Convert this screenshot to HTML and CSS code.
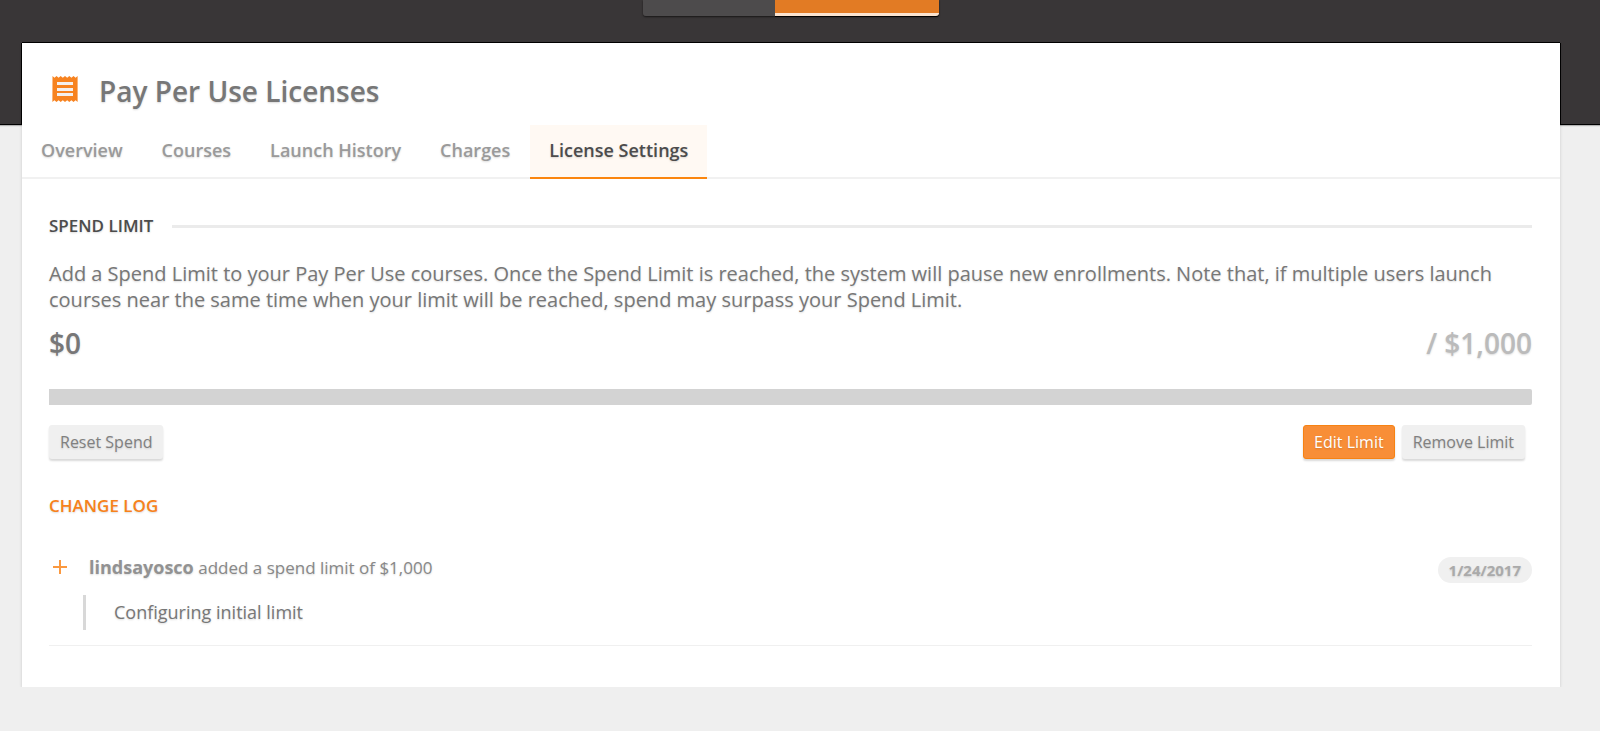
FILE: index.html
```
<!DOCTYPE html>
<html lang="en">
<head>
    <meta charset="UTF-8">
    <meta name="viewport" content="width=device-width, initial-scale=1.0">
    <title>Pay Per Use Licenses</title>
    <link rel="stylesheet" href="styles.css">
</head>
<body>
    <header class="top-bar">
        <div class="switcher">
            <div class="switch-item"></div>
            <div class="switch-item active"></div>
        </div>
    </header>

    <main class="card">
        <div class="card-head">
            <svg class="title-icon" width="26" height="26" viewBox="0 0 26 26" aria-hidden="true">
                <path fill="#f78320" d="M0.500 0l2 1.700 2-1.700 2.100 1.700 2.100-1.700 2.100 1.700 2.200-1.700 2.200 1.700 2.100-1.700 2.100 1.700 2.100-1.700 2.100 1.700 2-1.700v26l-2-1.700-2.100 1.700-2.100-1.700-2.100 1.700-2.100-1.700-2.200 1.700-2.200-1.700-2.100 1.700-2.100-1.700-2.100 1.700-2.100-1.700-2 1.700z"/>
                <path fill="#f4f0ee" d="M5 6h16v3H5zM5 12h16v3H5zM5 17h16v3H5z"/>
            </svg>
            <h1>Pay Per Use Licenses</h1>
        </div>

        <nav class="tabs">
            <a href="#overview">Overview</a>
            <a href="#courses">Courses</a>
            <a href="#history">Launch History</a>
            <a href="#charges">Charges</a>
            <a href="#settings" class="active">License Settings</a>
        </nav>

        <div class="card-body">
            <h2 class="section-title">SPEND LIMIT</h2>
            <p class="intro">Add a Spend Limit to your Pay Per Use courses. Once the Spend Limit is reached, the system will pause new enrollments. Note that, if multiple users launch courses near the same time when your limit will be reached, spend may surpass your Spend Limit.</p>

            <div class="amounts">
                <span class="spent">$0</span>
                <span class="limit">/ $1,000</span>
            </div>
            <div class="progress"></div>

            <div class="actions">
                <button type="button" class="btn">Reset Spend</button>
                <div class="limit-actions">
                    <button type="button" class="btn btn-primary">Edit Limit</button>
                    <button type="button" class="btn">Remove Limit</button>
                </div>
            </div>

            <h2 class="log-title">CHANGE LOG</h2>
            <div class="log-entry">
                <svg class="plus" width="14" height="14" viewBox="0 0 14 14" aria-hidden="true">
                    <path d="M7 0v14M0 7h14" stroke="#fb993f" stroke-width="2"/>
                </svg>
                <div class="log-text">
                    <p class="log-line"><strong>lindsayosco</strong> added a spend limit of $1,000</p>
                    <blockquote>Configuring initial limit</blockquote>
                </div>
                <time class="log-date" datetime="2017-01-24">1/24/2017</time>
            </div>
        </div>
    </main>
</body>
</html>
```
FILE: styles.css
```
* {
    box-sizing: border-box;
}

body {
    margin: 0;
    background-color: #efefef;
    color: #777;
    font-family: "Open Sans", "Noto Sans", sans-serif;
    text-shadow: 0 1px 2px rgba(0, 0, 0, 0.15);
}

h1, h2, p, blockquote {
    margin: 0;
}

.top-bar {
    display: flex;
    justify-content: center;
    align-items: flex-start;
    height: 125px;
    padding-right: 18px;
    background-color: #393637;
    border-bottom: 1px solid #000;
    box-shadow: 0 1px 1px rgba(0, 0, 0, 0.25);
}

.switcher {
    display: flex;
    height: 16px;
    border-radius: 0 0 3px 3px;
    box-shadow: 0 1px 2px rgba(0, 0, 0, 0.6);
}

.switch-item {
    width: 132px;
    background-color: #4d4b4c;
    border-radius: 0 0 0 3px;
}

.switch-item.active {
    width: 164px;
    background-color: #e27b24;
    border-bottom: 3px solid #fbe3cf;
    border-radius: 0 0 3px 0;
    box-shadow: 0 1px 0 #000;
}

.card {
    margin: -82px 40px 0 22px;
    background-color: #fff;
    box-shadow: 0 1px 3px rgba(0, 0, 0, 0.15);
}

/* dark outline only where the card covers the top bar */
.card-head {
    display: flex;
    align-items: center;
    gap: 21px;
    height: 82px;
    padding: 14px 30px 0;
    box-shadow: 0 -1px 0 #000, 1px 0 0 #000, -1px 0 0 #000;
}

.title-icon {
    margin-bottom: 4px;
}

.card-head h1 {
    font-size: 28px;
    font-weight: 600;
    line-height: 36px;
}

.tabs {
    display: flex;
    gap: 1px;
    height: 54px;
    border-bottom: 2px solid #f1f1f1;
}

.tabs a {
    height: 54px;
    padding: 0 19px;
    color: #9a9a9a;
    font-size: 18px;
    font-weight: 600;
    line-height: 50px;
    text-decoration: none;
}

.tabs a.active {
    color: #4c4c4c;
    background-color: #fff9f3;
    border-bottom: 2px solid #fb860e;
}

.card-body {
    padding: 35px 28px 41px 27px;
}

.section-title {
    display: flex;
    align-items: center;
    gap: 19px;
    color: #4c4c4c;
    font-size: 17px;
    font-weight: 600;
    line-height: 24px;
}

.section-title::after {
    content: "";
    flex: 1;
    height: 3px;
    background-color: #ebebeb;
}

.intro {
    margin-top: 23px;
    font-size: 20px;
    line-height: 26px;
}

.amounts {
    display: flex;
    justify-content: space-between;
    margin-top: 12px;
    font-size: 28px;
    font-weight: 600;
    line-height: 36px;
}

.limit {
    color: #bbb;
}

.progress {
    height: 16px;
    margin-top: 28px;
    background-color: #d3d3d3;
    border-radius: 0 2px 2px 0;
}

.actions {
    display: flex;
    justify-content: space-between;
    margin-top: 20px;
    padding-right: 7px;
}

.limit-actions {
    display: flex;
    gap: 7px;
}

.btn {
    height: 34px;
    padding: 0 11px;
    border: 0;
    border-radius: 3px;
    background-color: #f0f0f0;
    box-shadow: 0 2px 2px rgba(0, 0, 0, 0.15);
    color: #808080;
    font-family: inherit;
    font-size: 16px;
    line-height: 34px;
    text-shadow: inherit;
    cursor: pointer;
}

.btn-primary {
    padding: 0 10px;
    border: 1px solid #f78212;
    background-color: #f88e37;
    color: #fff;
    line-height: 32px;
}

.log-title {
    margin-top: 35px;
    color: #f7821b;
    font-size: 17px;
    font-weight: 600;
    line-height: 24px;
}

.log-entry {
    display: flex;
    align-items: flex-start;
    margin-top: 35px;
    padding-bottom: 15px;
    border-bottom: 1px solid #f0f0f0;
}

.plus {
    margin: 7px 16px 0 4px;
}

.log-text {
    flex: 1;
}

.log-line {
    padding-left: 6px;
    color: #888;
    font-size: 17px;
    line-height: 28px;
}

.log-line strong {
    color: #929292;
    font-size: 18px;
    font-weight: 700;
}

.log-text blockquote {
    margin-top: 13px;
    padding-left: 28px;
    border-left: 3px solid #d8d8d8;
    font-size: 18px;
    line-height: 35px;
}

.log-date {
    margin-top: 4px;
    padding: 0 11px;
    border-radius: 13px;
    background-color: #f0f0f0;
    color: #aaa;
    font-size: 15px;
    font-weight: 700;
    line-height: 26px;
}
```
